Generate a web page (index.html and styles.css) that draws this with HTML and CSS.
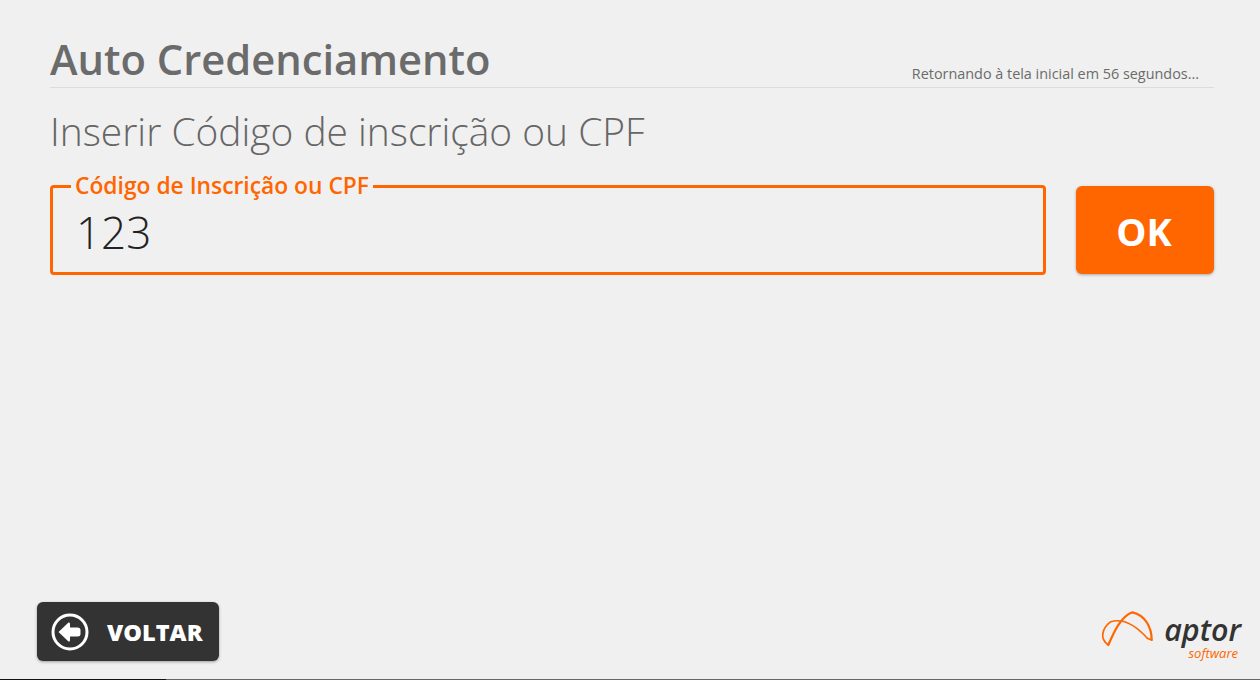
FILE: index.html
```html
<!DOCTYPE html>
<html lang="pt-BR">
<head>
    <meta charset="UTF-8">
    <title>Auto Credenciamento</title>
    <link rel="stylesheet" href="styles.css">
</head>
<body>
    <div class="page">
        <div class="content">
            <div class="header">
                <h1 class="title">Auto Credenciamento</h1>
                <span class="timer">Retornando à tela inicial em 56 segundos...</span>
            </div>
            <h2 class="subtitle">Inserir Código de inscrição ou CPF</h2>
            <div class="form-row">
                <fieldset class="field">
                    <legend class="field-label">Código de Inscrição ou CPF</legend>
                    <div class="field-value">123</div>
                </fieldset>
                <button class="ok-btn">OK</button>
            </div>
        </div>
        <div class="footer">
            <button class="back-btn">
                <svg class="back-icon" width="38" height="38" viewBox="0 0 38 38">
                    <circle cx="19" cy="19" r="17" fill="none" stroke="#fff" stroke-width="3"/>
                    <path d="M7.500 19 L17.500 9.500 Q19 9 19 11 V14.500 H26.500 Q29.500 14.500 29.500 17 V21 Q29.500 23.500 26.500 23.500 H19 V27 Q19 29 17.500 28.500 Z" fill="#fff"/>
                </svg>
                <span>VOLTAR</span>
            </button>
            <div class="logo">
                <svg class="logo-mark" width="54" height="38" viewBox="0 0 54 38">
                    <path d="M9.300 35 C15 21.700 21.700 6.700 33.300 2.300 C46.700 5 52.700 18.300 52.700 30" fill="none" stroke="#ff6600" stroke-width="2.200" stroke-linecap="round"/>
                    <path d="M9.300 35 C0 28.300 3.300 18.300 11.700 11.700 C23.300 8.300 35 13.300 48.300 28.300 L52.700 30" fill="none" stroke="#ff6600" stroke-width="1.700" stroke-linecap="round"/>
                </svg>
                <div class="logo-text">
                    <span class="logo-name">aptor</span>
                    <span class="logo-sub">software</span>
                </div>
            </div>
        </div>
        <div class="taskbar">
            <div class="taskbar-dark"></div>
        </div>
    </div>
</body>
</html>
```

FILE: styles.css
```css
* {
    margin: 0;
    padding: 0;
    box-sizing: border-box;
}

html, body {
    height: 100%;
}

body {
    font-family: "Open Sans", "Noto Sans", sans-serif;
    background: #f0f0f0;
    overflow: hidden;
}

.page {
    height: 100%;
    display: flex;
    flex-direction: column;
}

.content {
    flex: 1;
    padding: 30px 46px 0 50px;
}

.header {
    display: flex;
    justify-content: space-between;
    align-items: flex-end;
    height: 58px;
    border-bottom: 1px solid #dcdcdc;
}

.title {
    font-size: 41.7px;
    line-height: 60px;
    font-weight: 600;
    color: #6b6b6b;
    margin-bottom: -2px;
}

.timer {
    font-size: 14.4px;
    line-height: 26px;
    color: #6b6b6b;
    margin-right: 15px;
}

.subtitle {
    font-size: 38.9px;
    line-height: 50px;
    font-weight: 300;
    color: #666;
    margin-top: 18px;
}

.form-row {
    display: flex;
    gap: 30px;
    margin-top: 18px;
}

.field {
    flex: 1;
    height: 101px;
    border: 3px solid #ff6600;
    border-radius: 4px;
    padding: 0 23px;
}

.field-label {
    font-size: 22.8px;
    line-height: 24px;
    font-weight: 600;
    color: #ff6600;
    padding: 0 4px;
    margin-left: -5px;
}

.field-value {
    font-size: 44px;
    line-height: 60px;
    font-weight: 300;
    color: #222;
    margin-top: 4px;
}

.ok-btn {
    width: 138px;
    height: 88px;
    margin-top: 12px;
    padding: 2px 2px 0 0;
    border: none;
    border-radius: 6px;
    background: #ff6600;
    color: #fff;
    font-family: inherit;
    font-size: 38px;
    font-weight: 700;
    box-shadow: 0 1px 3px rgba(0,0,0,0.3);
}

.footer {
    display: flex;
    justify-content: space-between;
    align-items: flex-end;
    padding: 0 19px 18px 37px;
}

.back-btn {
    display: flex;
    align-items: center;
    gap: 18px;
    width: 182px;
    height: 59px;
    padding-left: 14px;
    border: none;
    border-radius: 6px;
    background: #333;
    color: #fff;
    font-family: inherit;
    font-size: 23.5px;
    font-weight: 800;
    box-shadow: 0 1px 3px rgba(0,0,0,0.35);
}

.logo {
    display: flex;
    align-items: flex-start;
    gap: 11px;
    height: 51px;
}

.logo-text {
    display: flex;
    flex-direction: column;
    align-items: flex-end;
}

.logo-name {
    font-size: 30.5px;
    line-height: 33px;
    font-weight: 600;
    font-style: italic;
    color: #333;
    margin-top: 3px;
}

.logo-sub {
    font-size: 13px;
    line-height: 13px;
    font-style: italic;
    color: #ff6600;
    margin-top: 1px;
    margin-right: 3px;
}

.taskbar {
    height: 1px;
    background: #666;
}

.taskbar-dark {
    width: 166px;
    height: 1px;
    background: #111;
}
```
